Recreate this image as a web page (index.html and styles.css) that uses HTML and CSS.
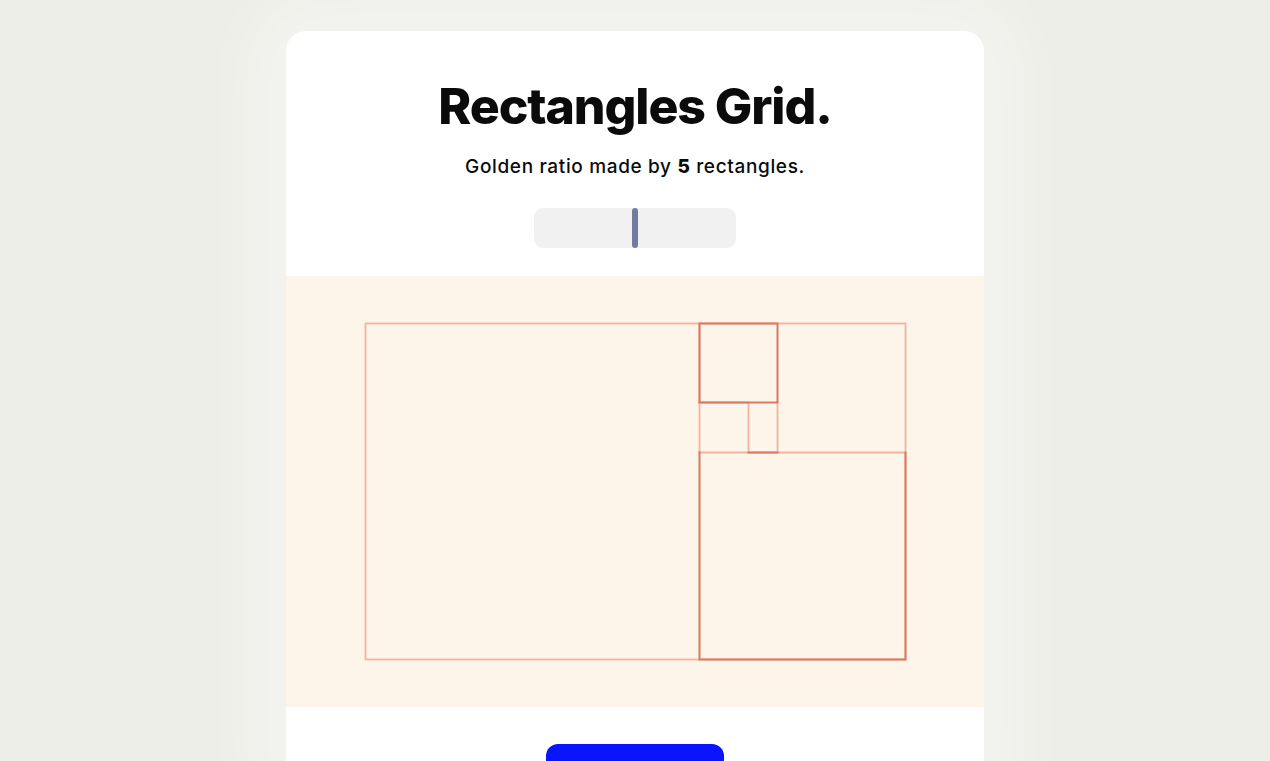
FILE: index.html
```html
<!DOCTYPE html>
<html lang="en">
<head>
<meta charset="utf-8">
<title>Rectangles Grid</title>
<link rel="stylesheet" href="styles.css">
</head>
<body>
<main class="card">
  <header class="head">
    <h1 class="title">Rectangles Grid.</h1>
    <p class="sub">Golden ratio made by <b>5</b> rectangles.</p>
    <div class="slider"><span class="thumb"></span></div>
  </header>
  <section class="stage">
    <svg class="grid" width="698" height="431" viewBox="0 0 698 431">
      <g fill="none" stroke-linecap="square">
        <g stroke="#f3b39d" stroke-width="1.8">
          <rect x="79.5" y="47.5" width="540" height="336"/>
          <line x1="413.5" y1="47.5" x2="413.5" y2="176.5"/>
          <line x1="413.5" y1="176.5" x2="619.5" y2="176.5"/>
          <line x1="413.5" y1="126.5" x2="462.5" y2="126.5"/>
          <line x1="462.5" y1="126.5" x2="462.5" y2="176.5"/>
          <line x1="491.5" y1="126.5" x2="491.5" y2="176.5"/>
        </g>
        <g stroke="#d77a61" stroke-width="2">
          <rect x="413.5" y="47.5" width="78" height="79"/>
          <polyline points="413.5,176.5 413.5,383.5 619.5,383.5 619.5,176.5"/>
          <line x1="462.5" y1="176.5" x2="491.5" y2="176.5"/>
        </g>
      </g>
    </svg>
  </section>
  <footer class="foot">
    <button class="btn" aria-label="Generate grid"></button>
  </footer>
</main>
</body>
</html>
```
FILE: styles.css
```css
html, body {
  margin: 0;
  padding: 0;
}
body {
  background: #eeeee9;
  font-family: Inter, "Noto Sans", sans-serif;
  color: #0b0b0b;
  overflow: hidden;
  height: 761px;
  padding-top: 31px;
  box-sizing: border-box;
}
.card {
  width: 698px;
  margin: 0 auto;
  background: #ffffff;
  border-radius: 20px;
  overflow: hidden;
  box-shadow: 0 0 70px 30px rgba(255, 255, 255, 0.35);
}
.head {
  height: 245px;
  box-sizing: border-box;
  padding-top: 45px;
  display: flex;
  flex-direction: column;
  align-items: center;
}
.title {
  margin: 0;
  font-size: 50px;
  line-height: 60px;
  font-weight: 800;
  letter-spacing: -1.1px;
}
.sub {
  margin: 19px 0 0;
  font-size: 19px;
  line-height: 24px;
  font-weight: 500;
  letter-spacing: 0.65px;
}
.sub b {
  font-weight: 800;
}
.slider {
  margin-top: 29px;
  width: 202px;
  height: 40px;
  border-radius: 9px;
  background: #f2f1f1;
  display: flex;
  justify-content: center;
}
.thumb {
  display: block;
  width: 6px;
  height: 40px;
  border-radius: 3px;
  background: #747ba0;
}
.stage {
  height: 431px;
  background: #fdf5e9;
}
.grid {
  display: block;
}
.foot {
  height: 60px;
  display: flex;
  justify-content: center;
  padding-top: 37px;
}
.btn {
  width: 178px;
  height: 52px;
  border: 0;
  border-radius: 12px;
  background: #0a14ff;
  padding: 0;
}
```
